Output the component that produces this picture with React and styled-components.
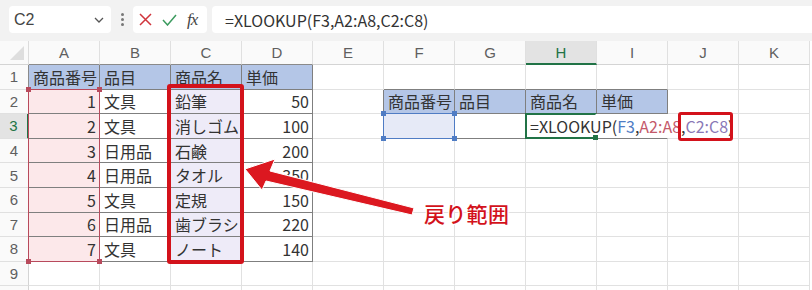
import styled, { createGlobalStyle } from "styled-components"

const GlobalStyle = createGlobalStyle`
  body {
    margin: 0;
    background: #fff;
    font-family: "Noto Sans CJK JP", "Noto Sans", sans-serif;
  }
`

const COLS = ["A", "B", "C", "D", "E", "F", "G", "H", "I", "J", "K"]
const COL_W = 71
const HEAD_W = 29
const HEAD_H = 24
const ROW_H = 24.6
const TOP = 41

const cells = {
  A1: "商品番号", B1: "品目", C1: "商品名", D1: "単価",
  A2: 1, B2: "文具", C2: "鉛筆", D2: 50,
  A3: 2, B3: "文具", C3: "消しゴム", D3: 100,
  A4: 3, B4: "日用品", C4: "石鹸", D4: 200,
  A5: 4, B5: "日用品", C5: "タオル", D5: 350,
  A6: 5, B6: "文具", C6: "定規", D6: 150,
  A7: 6, B7: "日用品", C7: "歯ブラシ", D7: 220,
  A8: 7, B8: "文具", C8: "ノート", D8: 140,
  F2: "商品番号", G2: "品目", H2: "商品名", I2: "単価",
}

const inTable = (r, c) =>
  (r >= 1 && r <= 8 && c >= 0 && c <= 3) || (r >= 2 && r <= 3 && c >= 5 && c <= 8)

const fillFor = (r, c) => {
  if (r === 1 && c <= 3) return "#b4c6e7"
  if (r === 2 && c >= 5 && c <= 8) return "#b4c6e7"
  if (c === 0 && r >= 2 && r <= 8) return "#fce8ea"
  if (c === 2 && r >= 2 && r <= 8) return "#eeebf8"
  if (c === 5 && r === 3) return "#e6eaf7"
  return null
}

const Page = styled.div`
  position: relative;
  width: 812px;
  height: 290px;
  overflow: hidden;
`

const Bar = styled.div`
  display: flex;
  align-items: flex-start;
  height: ${TOP}px;
  padding: 6px 0 0 9px;
  box-sizing: border-box;
  background: #f2f2f2;
`

const NameBox = styled.div`
  display: flex;
  align-items: center;
  justify-content: space-between;
  width: 102px;
  height: 27px;
  padding: 0 7px 0 5px;
  box-sizing: border-box;
  background: #fff;
  border-radius: 4px;
  font-size: 16px;
  color: #444;
  font-family: "Liberation Sans", sans-serif;
`

const Dots = styled.div`
  display: flex;
  flex-direction: column;
  align-items: center;
  justify-content: center;
  gap: 2px;
  width: 22px;
  height: 27px;

  span {
    width: 3px;
    height: 3px;
    border-radius: 50%;
    background: #777;
  }
`

const FuncBox = styled.div`
  display: flex;
  align-items: center;
  gap: 10px;
  width: 74px;
  height: 27px;
  padding: 0 0 0 6px;
  box-sizing: border-box;
  background: #fff;
  border-radius: 4px;
`

const Fx = styled.span`
  font-family: "Liberation Serif", serif;
  font-style: italic;
  font-size: 17px;
  color: #444;
  letter-spacing: -1px;
`

const Formula = styled.div`
  flex: 1;
  display: flex;
  align-items: center;
  height: 27px;
  margin-left: 5px;
  padding-left: 13px;
  background: #fff;
  border-radius: 4px 0 0 4px;
`

const Text = styled.span`
  font-size: 16px;
  color: #333;
  white-space: nowrap;
`

const Sheet = styled.div`
  display: grid;
  grid-template-columns: ${HEAD_W}px repeat(11, ${COL_W}px);
  grid-template-rows: ${HEAD_H}px repeat(10, ${ROW_H}px);
`

const Corner = styled.div`
  background: #fafafa;
  border-right: 1px solid #dcdcdc;
  border-bottom: 1px solid #d4d4d4;
  display: flex;
  align-items: flex-end;
  justify-content: flex-end;
  padding: 0 4px 4px 0;
  box-sizing: border-box;
`

const ColHead = styled.div`
  display: flex;
  align-items: center;
  justify-content: center;
  box-sizing: border-box;
  font-size: 15px;
  font-family: "Liberation Sans", sans-serif;
  color: ${p => (p.$active ? "#217346" : "#5f5f5f")};
  background: ${p => (p.$active ? "#e3e3e3" : "#fafafa")};
  border-right: 1px solid #e0e0e0;
  border-bottom: ${p => (p.$active ? "2px solid #217346" : `1px solid ${p.$dark ? "#8a8a8a" : "#d4d4d4"}`)};
`

const RowHead = styled.div`
  display: flex;
  align-items: center;
  justify-content: center;
  box-sizing: border-box;
  font-size: 15px;
  font-family: "Liberation Sans", sans-serif;
  color: ${p => (p.$active ? "#217346" : "#5f5f5f")};
  background: ${p => (p.$active ? "#e3e3e3" : "#fafafa")};
  border-bottom: 1px solid #e0e0e0;
  border-right: ${p => (p.$active ? "2px solid #217346" : `1px solid ${p.$dark ? "#8a8a8a" : "#d4d4d4"}`)};
`

const Cell = styled.div`
  position: relative;
  display: flex;
  align-items: center;
  justify-content: ${p => (p.$num ? "flex-end" : "flex-start")};
  padding: 0 3px 0 4px;
  box-sizing: border-box;
  font-size: 16px;
  color: #333;
  white-space: nowrap;
  background: ${p => p.$fill || "transparent"};
  border-right: 1px solid ${p => (p.$rb ? "#7f7f7f" : "#e1e1e1")};
  border-bottom: 1px solid ${p => (p.$bb ? "#7f7f7f" : "#e1e1e1")};
  overflow: ${p => (p.$spill ? "visible" : "hidden")};
  z-index: ${p => (p.$spill ? 3 : "auto")};
  ${p => p.$hideRight && "border-right-color: transparent;"}
`

const Ref = styled.span`
  color: ${p => p.$c || "inherit"};
`

const Range = styled.div`
  position: absolute;
  left: ${p => HEAD_W + p.$c * COL_W - 1}px;
  top: ${p => TOP + HEAD_H + (p.$r - 1) * ROW_H - 1}px;
  width: ${p => p.$w * COL_W + 1}px;
  height: ${p => p.$h * ROW_H + 1}px;
  border: ${p => p.$bw || 1}px solid ${p => p.$color};
  ${p => p.$open && "border-right-color: transparent;"}
  box-sizing: border-box;
  z-index: 4;
  pointer-events: none;
`

const Handle = styled.i`
  position: absolute;
  width: 5px;
  height: 5px;
  background: ${p => p.$color};
  ${p => (p.$x === "l" ? "left: -3px;" : "right: -3px;")}
  ${p => (p.$y === "t" ? "top: -3px;" : "bottom: -3px;")}
`

const Callout = styled.div`
  position: absolute;
  left: ${p => p.$x}px;
  top: ${p => p.$y}px;
  width: ${p => p.$w}px;
  height: ${p => p.$h}px;
  border: ${p => p.$bw}px solid #d3121b;
  border-radius: 3px;
  box-sizing: border-box;
  z-index: 6;
`

const Arrow = styled.svg`
  position: absolute;
  left: 0;
  top: 0;
  z-index: 6;
`

const Label = styled.div`
  position: absolute;
  left: 424px;
  top: 198px;
  z-index: 7;
  font-size: 21px;
  font-weight: 500;
  color: #d3121b;
  letter-spacing: 0.3px;
  text-shadow: -1px -1px 0 #fff, 1px -1px 0 #fff, -1px 1px 0 #fff, 1px 1px 0 #fff, 0 0 3px #fff;
`

const Handles = ({ color }) => (
  <>
    <Handle $color={color} $x="l" $y="t" />
    <Handle $color={color} $x="r" $y="t" />
    <Handle $color={color} $x="l" $y="b" />
    <Handle $color={color} $x="r" $y="b" />
  </>
)

const FormulaText = ({ plain }) => (
  <Text>
    =XLOOKUP(<Ref $c={plain ? null : "#4f7cc4"}>F3</Ref>,<Ref $c={plain ? null : "#c4596a"}>A2:A8</Ref>,
    <Ref $c={plain ? null : "#8a78b6"}>C2:C8</Ref>)
  </Text>
)

const App = () => {
  const rows = []
  for (let r = 1; r <= 10; r++) {
    rows.push(
      <RowHead key={`r${r}`} $active={r === 3} $dark={inTable(r, 0)}>
        {r < 10 ? r : ""}
      </RowHead>
    )
    COLS.forEach((col, c) => {
      const key = `${col}${r}`
      const v = cells[key]
      const isH3 = key === "H3"
      rows.push(
        <Cell
          key={key}
          $num={typeof v === "number"}
          $fill={fillFor(r, c)}
          $rb={inTable(r, c) || inTable(r, c + 1)}
          $bb={inTable(r, c) || inTable(r + 1, c)}
          $spill={isH3}
          $hideRight={r === 3 && (c === 7 || c === 8)}
        >
          {isH3 ? <FormulaText /> : v}
        </Cell>
      )
    })
  }

  return (
    <Page>
      <GlobalStyle />
      <Bar>
        <NameBox>
          C2
          <svg width="10" height="6" viewBox="0 0 10 6">
            <path d="M1 1l4 4 4-4" fill="none" stroke="#555" strokeWidth="1.3" />
          </svg>
        </NameBox>
        <Dots>
          <span />
          <span />
          <span />
        </Dots>
        <FuncBox>
          <svg width="13" height="13" viewBox="0 0 13 13">
            <path d="M1 1l11 11M12 1L1 12" stroke="#d0343c" strokeWidth="1.5" />
          </svg>
          <svg width="15" height="12" viewBox="0 0 15 12">
            <path d="M1 6l4.5 5L14 1" fill="none" stroke="#3c9b5f" strokeWidth="1.5" />
          </svg>
          <Fx>fx</Fx>
        </FuncBox>
        <Formula>
          <FormulaText plain />
        </Formula>
      </Bar>

      <Sheet>
        <Corner>
          <svg width="14" height="14" viewBox="0 0 14 14">
            <path d="M14 0V14H0Z" fill="#dedede" />
          </svg>
        </Corner>
        {COLS.map((col, c) => (
          <ColHead key={col} $active={col === "H"} $dark={inTable(1, c)}>
            {col}
          </ColHead>
        ))}
        {rows}
      </Sheet>

      <Range $c={0} $r={2} $w={1} $h={7} $color="#b84a5c">
        <Handles color="#b84a5c" />
      </Range>
      <Range $c={5} $r={3} $w={1} $h={1} $color="#4f7cc4">
        <Handles color="#4f7cc4" />
      </Range>
      <Range $c={7} $r={3} $w={1} $h={1} $color="#217346" $bw={2} $open>
        <Handle $color="#217346" $x="r" $y="b" />
      </Range>

      <Callout $x={167} $y={84} $w={77} $h={180} $bw={4} />
      <Callout $x={678} $y={112} $w={55} $h={29} $bw={3} />

      <Arrow width="812" height="290" viewBox="0 0 812 290">
        <path
          d="M245 169 L275 159 L270 171 L414 208 L412 215 L266 181 L262 190 Z"
          fill="#dc1820"
          stroke="#fff"
          strokeWidth="1"
          strokeLinejoin="round"
        />
      </Arrow>
      <Label>戻り範囲</Label>
    </Page>
  )
}

export default App
